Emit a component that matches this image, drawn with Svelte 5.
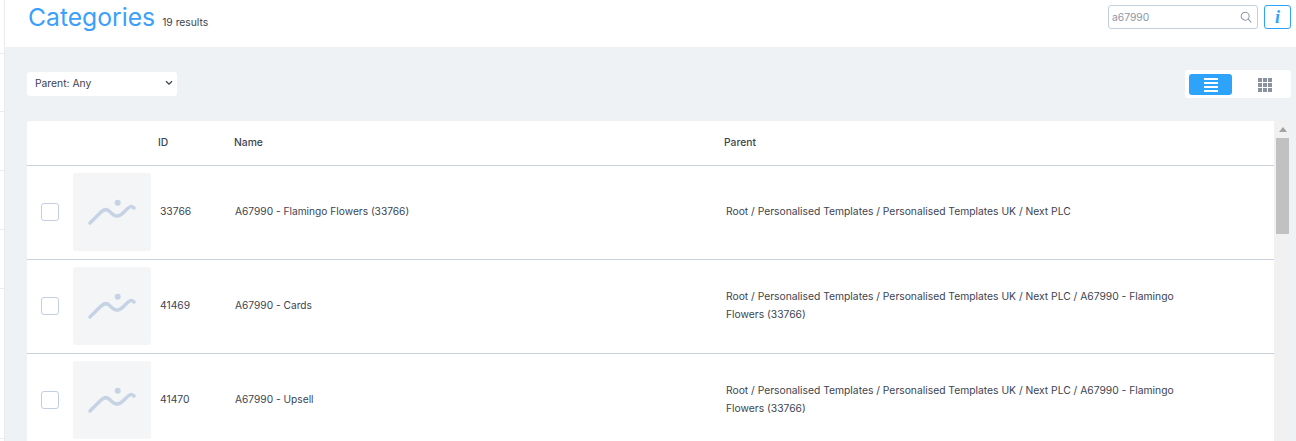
<script>
  const rows = [
    { id: 33766, name: 'A67990 - Flamingo Flowers (33766)', parent: 'Root / Personalised Templates / Personalised Templates UK / Next PLC' },
    { id: 41469, name: 'A67990 - Cards', parent: 'Root / Personalised Templates / Personalised Templates UK / Next PLC / A67990 - Flamingo Flowers (33766)' },
    { id: 41470, name: 'A67990 - Upsell', parent: 'Root / Personalised Templates / Personalised Templates UK / Next PLC / A67990 - Flamingo Flowers (33766)' }
  ];
  // gaps between the divider ticks of the cut-off sidebar
  const ticks = [53, 57, 58, 58, 58, 149];
</script>

<div class="shell">
  <aside class="rail">
    {#each ticks as gap}
      <i class="tick" style="margin-top: {gap}px"></i>
    {/each}
  </aside>

  <div class="page">
    <header class="top">
      <div class="title">
        <h1>Categories</h1>
        <span class="count">19 results</span>
      </div>
      <div class="tools">
        <div class="search">
          <span class="query">a67990</span>
          <svg width="12" height="12" viewBox="0 0 13 13" fill="none" stroke="#8f9aa8" stroke-width="1.1">
            <circle cx="5.6" cy="5.6" r="4.3" />
            <path d="M8.8 8.8 L12 12" stroke-linecap="round" />
          </svg>
        </div>
        <button class="info">i</button>
      </div>
    </header>

    <main class="body">
      <div class="filters">
        <div class="select">
          <span>Parent: Any</span>
          <svg width="8" height="6" viewBox="0 0 8 6" fill="none" stroke="#3b4350" stroke-width="1.3">
            <path d="M1 1.2 L4 4.2 L7 1.2" />
          </svg>
        </div>
        <div class="views">
          <button class="view active" aria-label="List view">
            <svg width="14" height="14" viewBox="0 0 14 14" fill="#fff">
              <rect x="0" y="0" width="14" height="2" />
              <rect x="0" y="4" width="14" height="2" />
              <rect x="0" y="8" width="14" height="2" />
              <rect x="0" y="12" width="14" height="2" />
            </svg>
          </button>
          <button class="view" aria-label="Grid view">
            <svg width="14" height="14" viewBox="0 0 14 14" fill="#8a92a0">
              {#each [0, 5, 10] as y}
                {#each [0, 5, 10] as x}
                  <rect {x} {y} width="4" height="4" />
                {/each}
              {/each}
            </svg>
          </button>
        </div>
      </div>

      <div class="card">
        <div class="table">
          <div class="head">
            <span class="c-id">ID</span>
            <span class="c-name">Name</span>
            <span class="c-parent">Parent</span>
          </div>
          {#each rows as row}
            <div class="row">
              <span class="check"></span>
              <div class="thumb">
                <svg width="48" height="30" viewBox="0 0 48 30" fill="none">
                  <circle cx="29.7" cy="5.7" r="3" fill="#c5d3e4" />
                  <path d="M2 26 L12 16 C15 13 18 11 21 14 C24 17 26 19 29 19 C33 19 35 16 38 13 C41 10 43 8 46 11" stroke="#c5d3e4" stroke-width="3.4" stroke-linecap="round" />
                </svg>
              </div>
              <span class="c-id">{row.id}</span>
              <span class="c-name">{row.name}</span>
              <span class="c-parent">{row.parent}</span>
            </div>
          {/each}
        </div>
        <div class="scrollbar">
          <svg class="arrow" width="8" height="5" viewBox="0 0 8 5" fill="#a3a3a3"><path d="M4 0 L8 5 L0 5 Z" /></svg>
          <div class="thumb-bar"></div>
        </div>
      </div>
    </main>
  </div>
</div>

<style>
  :global(body) {
    margin: 0;
    background: #fff;
    overflow: hidden;
  }

  .shell {
    display: flex;
    height: 441px;
    overflow: hidden;
  }

  .rail {
    width: 4px;
    flex: none;
    display: flex;
    flex-direction: column;
  }

  .tick {
    display: block;
    flex: none;
    height: 1px;
    background: #e8ecf1;
  }

  .page {
    flex: 1;
    min-width: 0;
    border-left: 1px solid #e8ecf1;
    font-family: Inter, "Liberation Sans", sans-serif;
    font-size: 10.3px;
    color: #3d4450;
    overflow: hidden;
  }

  .top {
    height: 47px;
    display: flex;
    justify-content: space-between;
    padding: 0 5px 0 23px;
    background: #fff;
  }

  .title {
    display: flex;
    align-items: baseline;
    height: 34px;
    gap: 7px;
  }

  h1 {
    margin: 0;
    font-size: 24.7px;
    font-weight: 400;
    line-height: 34px;
    color: #3aa0fb;
  }

  .tools {
    display: flex;
    gap: 6px;
    padding-top: 5px;
    align-items: flex-start;
  }

  .search {
    width: 150px;
    height: 24px;
    box-sizing: border-box;
    border: 1px solid #c3d0de;
    border-radius: 3px;
    display: flex;
    align-items: center;
    justify-content: space-between;
    padding: 0 5px 0 3px;
    color: #8c96a5;
  }

  .info {
    width: 27px;
    height: 24px;
    padding: 0;
    border: 1px solid #2ea3fb;
    border-radius: 3px;
    background: #fff;
    color: #2ea3fb;
    font-family: "Liberation Serif", serif;
    font-style: italic;
    font-weight: 700;
    font-size: 18px;
  }

  .body {
    height: 394px;
    background: #eff2f5;
    padding: 23px 5px 0 22px;
  }

  .filters {
    display: flex;
    justify-content: space-between;
    align-items: flex-start;
  }

  .select {
    width: 150px;
    height: 24px;
    margin-top: 2px;
    box-sizing: border-box;
    background: #fff;
    border-radius: 3px;
    display: flex;
    align-items: center;
    justify-content: space-between;
    padding: 0 4px 2px 8px;
  }

  .views {
    width: 106px;
    height: 28px;
    box-sizing: border-box;
    background: #fff;
    border-radius: 3px;
    padding: 4px 4px 3px;
    display: flex;
    gap: 11px;
  }

  .view {
    width: 43px;
    border: 0;
    border-radius: 3px;
    background: transparent;
    padding: 0;
    display: flex;
    align-items: center;
    justify-content: center;
  }

  .view.active {
    background: #2ea3fb;
  }

  .card {
    margin-top: 23px;
    background: #fff;
    border-radius: 3px 0 0 0;
    display: flex;
    height: 320px;
    overflow: hidden;
  }

  .table {
    flex: 1;
    min-width: 0;
  }

  .head {
    height: 42px;
    padding-bottom: 2px;
    display: flex;
    align-items: center;
    border-bottom: 1px solid #c9d2da;
    font-weight: 500;
  }

  .head .c-id {
    margin-left: 131px;
    width: 76px;
  }

  .head .c-name {
    width: 490px;
  }

  .row {
    height: 92px;
    padding-bottom: 1px;
    display: flex;
    align-items: center;
    border-bottom: 1px solid #c9d2da;
  }

  .row span:not(.check) {
    margin-bottom: 3px;
  }

  .check {
    width: 18px;
    height: 18px;
    box-sizing: border-box;
    border: 1px solid #c3cfde;
    border-radius: 3px;
    margin-left: 14px;
  }

  .thumb {
    width: 78px;
    height: 78px;
    margin-left: 14px;
    background: #f4f5f7;
    border-radius: 3px;
    display: flex;
    align-items: center;
    justify-content: center;
  }

  .row .c-id {
    margin-left: 9px;
    width: 75px;
  }

  .row .c-name {
    width: 491px;
    font-size: 10.2px;
  }

  .row .c-parent {
    width: 460px;
    line-height: 18px;
  }

  .scrollbar {
    width: 17px;
    background: #f1f1f1;
    display: flex;
    flex-direction: column;
    align-items: center;
  }

  .arrow {
    margin: 6px 0 6px;
  }

  .thumb-bar {
    width: 13px;
    height: 96px;
    background: #c1c1c1;
  }
</style>
